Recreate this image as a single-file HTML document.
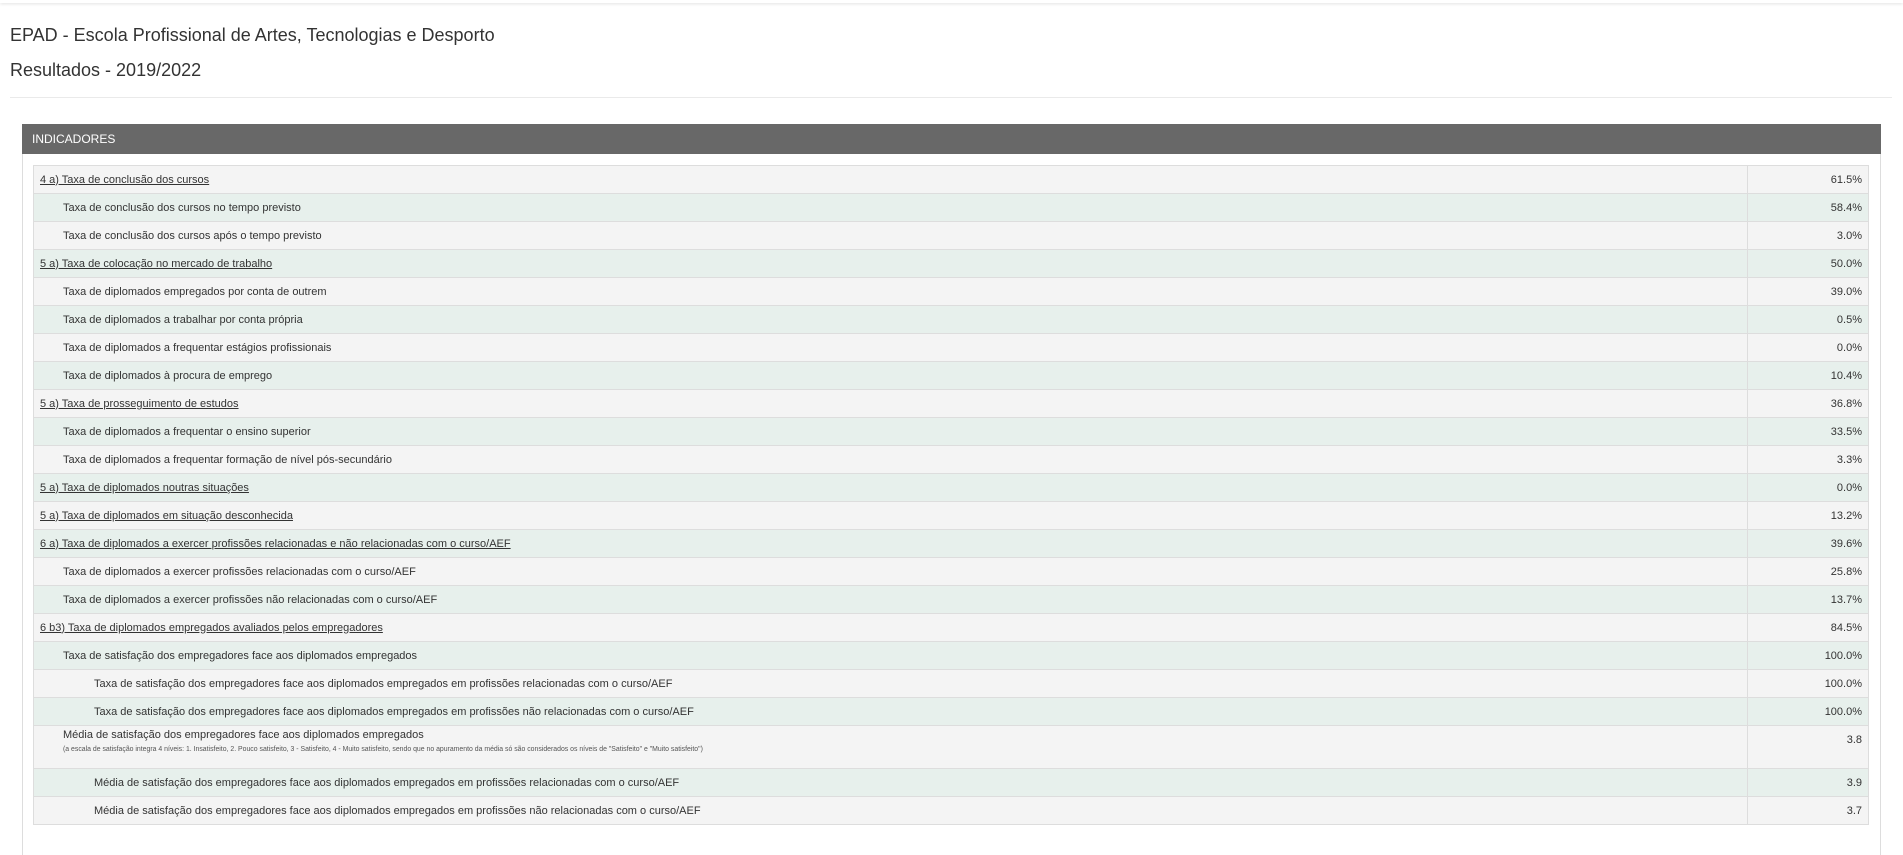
<!DOCTYPE html>
<html style="height:855px;overflow:hidden"><head><meta charset="utf-8">
<style>
*{box-sizing:border-box;margin:0;padding:0}
body{width:1903px;height:855px;background:#fff;font-family:"Liberation Sans",sans-serif;color:#333;position:relative;overflow:hidden}
.top{position:absolute;left:0;top:0;width:1903px;height:3px;box-shadow:0 1px 3px rgba(0,0,0,.12)}
.t1{position:absolute;left:10px;top:25px;font-size:18px;color:#333}
.t2{position:absolute;left:10px;top:60px;font-size:18px;color:#333}
.hr{position:absolute;left:10px;top:97px;width:1882px;height:1px;background:#eaeaea}
.panel{position:absolute;left:22px;top:124px;width:1859px;height:731px;border-left:1px solid #ddd;border-right:1px solid #ddd}
.ph{height:30px;background:#686868;color:#fff;font-size:12px;line-height:30px;padding-left:10px;margin:0 -1px}
table{position:absolute;left:10px;top:41px;width:1836px;border-collapse:collapse;font-size:11px}
td{border:1px solid #ddd;height:28px;padding:0 6px;vertical-align:middle;white-space:nowrap}
td.v{width:121px;text-align:right}
tr:nth-child(odd) td{background:#f4f4f4}
tr:nth-child(even) td{background:#e7f0ec}
.l1{padding-left:29px}.l2{padding-left:60px}
u{text-decoration:underline}
.note{font-size:6.9px;color:#555;margin-top:5px;display:block}
</style></head><body>
<div class="top"></div>
<div class="t1">EPAD - Escola Profissional de Artes, Tecnologias e Desporto</div>
<div class="t2">Resultados - 2019/2022</div>
<div class="hr"></div>
<div class="panel">
<div class="ph">INDICADORES</div>
<table>
<tr><td><u>4 a) Taxa de conclusão dos cursos</u></td><td class="v">61.5%</td></tr>
<tr><td class="l1">Taxa de conclusão dos cursos no tempo previsto</td><td class="v">58.4%</td></tr>
<tr><td class="l1">Taxa de conclusão dos cursos após o tempo previsto</td><td class="v">3.0%</td></tr>
<tr><td><u>5 a) Taxa de colocação no mercado de trabalho</u></td><td class="v">50.0%</td></tr>
<tr><td class="l1">Taxa de diplomados empregados por conta de outrem</td><td class="v">39.0%</td></tr>
<tr><td class="l1">Taxa de diplomados a trabalhar por conta própria</td><td class="v">0.5%</td></tr>
<tr><td class="l1">Taxa de diplomados a frequentar estágios profissionais</td><td class="v">0.0%</td></tr>
<tr><td class="l1">Taxa de diplomados à procura de emprego</td><td class="v">10.4%</td></tr>
<tr><td><u>5 a) Taxa de prosseguimento de estudos</u></td><td class="v">36.8%</td></tr>
<tr><td class="l1">Taxa de diplomados a frequentar o ensino superior</td><td class="v">33.5%</td></tr>
<tr><td class="l1">Taxa de diplomados a frequentar formação de nível pós-secundário</td><td class="v">3.3%</td></tr>
<tr><td><u>5 a) Taxa de diplomados noutras situações</u></td><td class="v">0.0%</td></tr>
<tr><td><u>5 a) Taxa de diplomados em situação desconhecida</u></td><td class="v">13.2%</td></tr>
<tr><td><u>6 a) Taxa de diplomados a exercer profissões relacionadas e não relacionadas com o curso/AEF</u></td><td class="v">39.6%</td></tr>
<tr><td class="l1">Taxa de diplomados a exercer profissões relacionadas com o curso/AEF</td><td class="v">25.8%</td></tr>
<tr><td class="l1">Taxa de diplomados a exercer profissões não relacionadas com o curso/AEF</td><td class="v">13.7%</td></tr>
<tr><td><u>6 b3) Taxa de diplomados empregados avaliados pelos empregadores</u></td><td class="v">84.5%</td></tr>
<tr><td class="l1">Taxa de satisfação dos empregadores face aos diplomados empregados</td><td class="v">100.0%</td></tr>
<tr><td class="l2">Taxa de satisfação dos empregadores face aos diplomados empregados em profissões relacionadas com o curso/AEF</td><td class="v">100.0%</td></tr>
<tr><td class="l2">Taxa de satisfação dos empregadores face aos diplomados empregados em profissões não relacionadas com o curso/AEF</td><td class="v">100.0%</td></tr>
<tr><td class="l1" style="height:43px;padding-top:3px;vertical-align:top">Média de satisfação dos empregadores face aos diplomados empregados<span class="note">(a escala de satisfação integra 4 níveis: 1. Insatisfeito, 2. Pouco satisfeito, 3 - Satisfeito, 4 - Muito satisfeito, sendo que no apuramento da média só são considerados os níveis de "Satisfeito" e "Muito satisfeito")</span></td><td class="v" style="vertical-align:top;padding-top:8px">3.8</td></tr>
<tr><td class="l2">Média de satisfação dos empregadores face aos diplomados empregados em profissões relacionadas com o curso/AEF</td><td class="v">3.9</td></tr>
<tr><td class="l2">Média de satisfação dos empregadores face aos diplomados empregados em profissões não relacionadas com o curso/AEF</td><td class="v">3.7</td></tr>
</table>
</div>
</body></html>
